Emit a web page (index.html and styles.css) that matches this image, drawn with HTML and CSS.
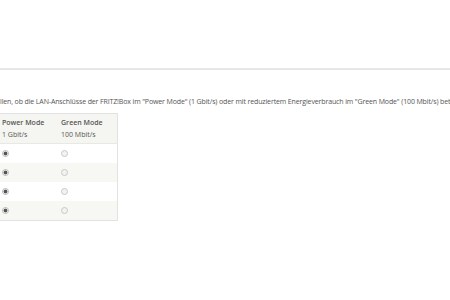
FILE: index.html
```html
<!DOCTYPE html>
<html lang="de">
<head>
    <meta charset="UTF-8">
    <meta name="viewport" content="width=device-width, initial-scale=1.0">
    <title>LAN-Einstellungen</title>
    <link rel="stylesheet" href="styles.css">
</head>
<body>
    <div class="page">
        <div class="rule"></div>
        <p class="intro">llen, ob die LAN-Anschlüsse der FRITZ!Box im "Power Mode" (1 Gbit/s) oder mit reduziertem Energieverbrauch im "Green Mode" (100 Mbit/s) betrieben werden sollen.</p>

        <table class="modes">
            <thead>
                <tr>
                    <th>Power Mode<span>1 Gbit/s</span></th>
                    <th>Green Mode<span>100 Mbit/s</span></th>
                </tr>
            </thead>
            <tbody>
                <tr>
                    <td><input type="radio" name="lan1" checked></td>
                    <td><input type="radio" name="lan1"></td>
                </tr>
                <tr>
                    <td><input type="radio" name="lan2" checked></td>
                    <td><input type="radio" name="lan2"></td>
                </tr>
                <tr>
                    <td><input type="radio" name="lan3" checked></td>
                    <td><input type="radio" name="lan3"></td>
                </tr>
                <tr>
                    <td><input type="radio" name="lan4" checked></td>
                    <td><input type="radio" name="lan4"></td>
                </tr>
            </tbody>
        </table>
    </div>
</body>
</html>
```

FILE: styles.css
```css
body {
    margin: 0;
    padding: 0;
    background-color: #fff;
    font-family: "Open Sans", "Liberation Sans", sans-serif;
    color: #555;
}
.page {
    padding-top: 68px;
}
.rule {
    height: 0;
    border-top: 2px solid #e6e6e6;
}
.intro {
    margin: 27px 0 0 0;
    font-size: 7px;
    line-height: 10px;
    letter-spacing: -0.13px;
    white-space: nowrap;
    overflow: hidden;
}
.modes {
    margin-top: 6px;
    width: 118px;
    border-collapse: collapse;
    border: 1px solid #e2e2e2;
    border-left: none;
    font-size: 7px;
}
.modes th {
    width: 58px;
    padding: 4px 2px 3px 2px;
    text-align: left;
    font-weight: 600;
    line-height: 10px;
    color: #555;
    background-color: #f5f5f1;
    border-bottom: 1px solid #e8e8e4;
}
.modes th + th {
    padding-left: 3px;
}
.modes th span {
    display: block;
    margin-top: 2px;
    font-weight: normal;
}
.modes td {
    height: 19px;
    padding: 0 0 0 2px;
}
.modes td + td {
    padding-left: 3px;
}
.modes tbody tr:nth-child(even) td {
    background-color: #f7f7f4;
}
.modes input[type="radio"] {
    appearance: none;
    -webkit-appearance: none;
    display: block;
    margin: 0;
    width: 7px;
    height: 7px;
    border: 1px solid #c8c8c8;
    border-radius: 50%;
    background-color: #f2f2f2;
}
.modes input[type="radio"]:checked {
    border-color: #bbb;
    background: radial-gradient(circle, #555 0, #555 1.6px, #eee 2.2px);
}
```
